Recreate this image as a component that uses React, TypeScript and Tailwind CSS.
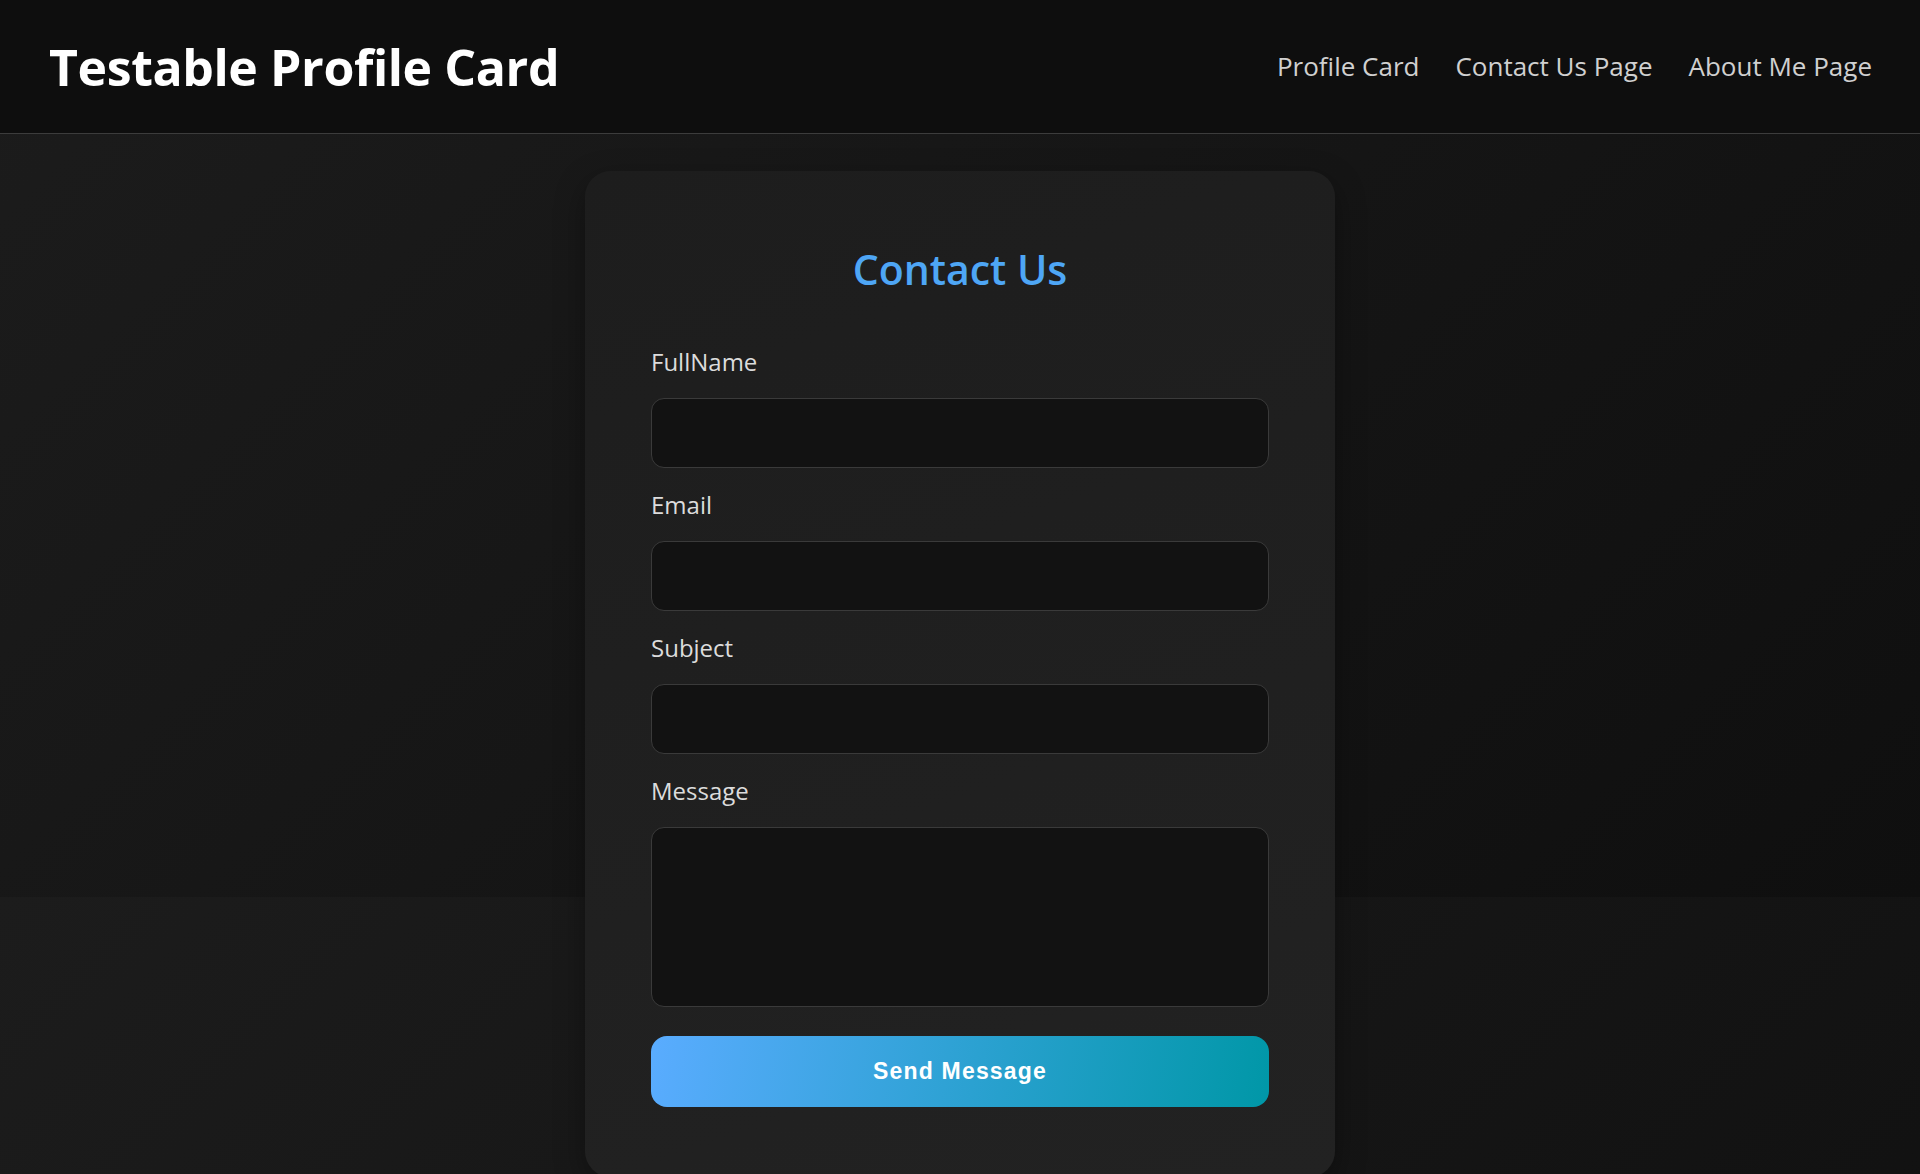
import React from "react";

const fields = [
  { id: "fullname", label: "FullName" },
  { id: "email", label: "Email" },
  { id: "subject", label: "Subject" },
];

const Header = () => (
  <header className="h-[134px] bg-[#0e0e0e] border-b border-[#3c3c3c] flex items-center justify-between pl-[49px] pr-[48px]">
    <h1 className="text-[50px] font-bold text-white tracking-[-0.4px] leading-none">
      Testable Profile Card
    </h1>
    <nav className="flex gap-[36px] text-[26px] text-[#d0d0d0]">
      <a href="#">Profile Card</a>
      <a href="#">Contact Us Page</a>
      <a href="#">About Me Page</a>
    </nav>
  </header>
);

const ContactCard = () => (
  <div className="w-[750px] rounded-[26px] bg-[linear-gradient(160deg,#1d1d1d,#222222)] shadow-[0_10px_30px_rgba(0,0,0,0.35)] px-[66px] pt-[70px] pb-[70px]">
    <h2 className="text-center text-[41px] font-semibold text-[#4ea6f5] leading-[56px] mb-[51px]">
      Contact Us
    </h2>
    <form onSubmit={(e) => e.preventDefault()}>
      {fields.map((f) => (
        <div key={f.id} className="mb-[23px]">
          <label htmlFor={f.id} className="block text-[24px] font-medium text-[#dcdcdc] leading-[28px] mb-[22px]">
            {f.label}
          </label>
          <input
            id={f.id}
            type="text"
            className="block w-full h-[70px] rounded-[13px] bg-[#121212] border border-[#3a3a3a] px-4 text-white outline-none"
          />
        </div>
      ))}
      <div className="mb-[29px]">
        <label htmlFor="message" className="block text-[24px] font-medium text-[#dcdcdc] leading-[28px] mb-[22px]">
          Message
        </label>
        <textarea
          id="message"
          className="block w-full h-[180px] rounded-[13px] bg-[#121212] border border-[#3a3a3a] px-4 py-3 text-white outline-none resize-none"
        />
      </div>
      <button
        type="submit"
        className="block w-full h-[71px] rounded-[16px] bg-[linear-gradient(100deg,#5aacff,#0097a7)] text-white text-[23px] font-bold tracking-[1.2px] [font-family:'Liberation_Sans',Arial,sans-serif]"
      >
        Send Message
      </button>
    </form>
  </div>
);

export default function App() {
  return (
    <div className="min-h-screen bg-[linear-gradient(135deg,#1c1c1c,#0f0f0f)] bg-[length:100%_897px] [font-family:'Open_Sans',sans-serif]">
      <Header />
      <main className="flex justify-center pt-[37px]">
        <ContactCard />
      </main>
    </div>
  );
}
